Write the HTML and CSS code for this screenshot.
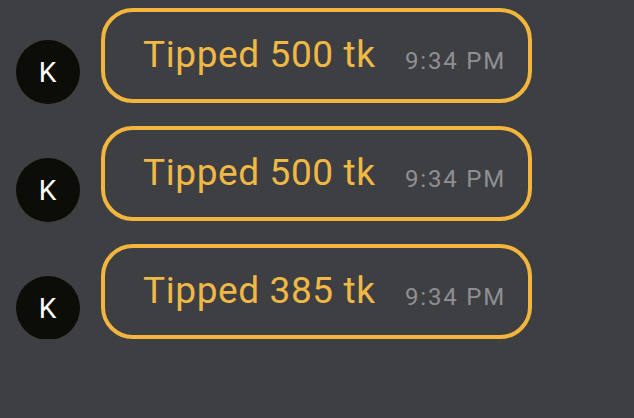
FILE: index.html
```html
<!DOCTYPE html>
<html lang="en">
<head>
  <meta charset="UTF-8">
  <meta name="viewport" content="width=device-width, initial-scale=1.0">
  <title>Tips</title>
  <link rel="stylesheet" href="styles.css">
</head>
<body>
  <div class="chat">
    <div class="msg">
      <div class="avatar">K</div>
      <div class="bubble">
        <span class="text">Tipped 500 tk</span>
        <span class="time">9:34 PM</span>
      </div>
    </div>
    <div class="msg">
      <div class="avatar">K</div>
      <div class="bubble">
        <span class="text">Tipped 500 tk</span>
        <span class="time">9:34 PM</span>
      </div>
    </div>
    <div class="msg">
      <div class="avatar">K</div>
      <div class="bubble">
        <span class="text">Tipped 385 tk</span>
        <span class="time">9:34 PM</span>
      </div>
    </div>
  </div>
</body>
</html>
```

FILE: styles.css
```css
body {
  margin: 0;
  background: #3e3f43;
  font-family: Roboto, "Liberation Sans", sans-serif;
}
.chat {
  padding: 8px 0 0 16px;
  display: flex;
  flex-direction: column;
  gap: 23px;
}
.msg {
  display: flex;
  align-items: flex-end;
  gap: 21px;
}
.avatar {
  width: 64px;
  height: 64px;
  border-radius: 50%;
  background: #0c0d07;
  color: #fff;
  font-size: 28px;
  letter-spacing: 1px;
  display: flex;
  align-items: center;
  justify-content: center;
  margin-bottom: -1px;
}
.bubble {
  box-sizing: border-box;
  width: 431px;
  height: 95px;
  border: 4px solid #f2b53d;
  border-radius: 32px;
  padding: 24px 22px 0 38px;
  display: flex;
  align-items: baseline;
  justify-content: space-between;
  line-height: 1;
}
.text {
  color: #f0b845;
  font-size: 37px;
  letter-spacing: 0.6px;
}
.time {
  color: #8e8f93;
  font-size: 24px;
  letter-spacing: 1.8px;
  position: relative;
  top: 2px;
}
```
